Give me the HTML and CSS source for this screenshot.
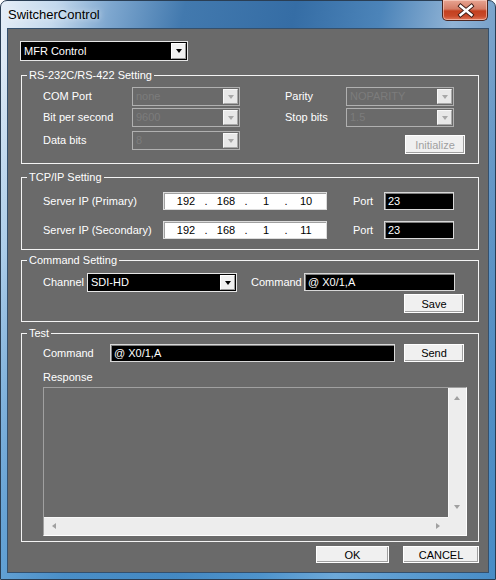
FILE: index.html
```html
<!DOCTYPE html>
<html>
<head>
<meta charset="utf-8">
<title>SwitcherControl</title>
<link rel="stylesheet" href="styles.css">
</head>
<body>
<div class="window">
  <div class="titlebar">
    <span class="title">SwitcherControl</span>
    <div class="close">
      <svg width="44" height="19" viewBox="0 0 44 19">
        <path d="M17.5 5 L28.5 14 M28.5 5 L17.5 14" stroke="#3a1a14" stroke-width="4.2" stroke-linecap="square"/>
        <path d="M17.5 5 L28.5 14 M28.5 5 L17.5 14" stroke="#ffffff" stroke-width="2.4" stroke-linecap="square"/>
      </svg>
    </div>
  </div>
  <div class="client">
    <div class="combo combo-main">
      <span class="val">MFR Control</span>
      <span class="dd"><i class="tri"></i></span>
    </div>

    <div class="group g-rs">
      <span class="legend">RS-232C/RS-422 Setting</span>
      <div class="row">
        <span class="lbl w89">COM Port</span>
        <div class="combo dis w108"><span class="val">none</span><span class="dd"><i class="tri"></i></span></div>
        <span class="lbl w61 ml45">Parity</span>
        <div class="combo dis w108"><span class="val">NOPARITY</span><span class="dd"><i class="tri"></i></span></div>
      </div>
      <div class="row mt2">
        <span class="lbl w89">Bit per second</span>
        <div class="combo dis w108"><span class="val">9600</span><span class="dd"><i class="tri"></i></span></div>
        <span class="lbl w61 ml45">Stop bits</span>
        <div class="combo dis w108"><span class="val">1.5</span><span class="dd"><i class="tri"></i></span></div>
      </div>
      <div class="row mt4 top">
        <span class="lbl w89 h19">Data bits</span>
        <div class="combo dis w108"><span class="val">8</span><span class="dd"><i class="tri"></i></span></div>
        <div class="btn btn-dis init">Initialize</div>
      </div>
    </div>

    <div class="group g-tcp">
      <span class="legend">TCP/IP Setting</span>
      <div class="row">
        <span class="lbl w120">Server IP (Primary)</span>
        <div class="ipbox"><span class="seg">192</span><span class="dot">.</span><span class="seg">168</span><span class="dot">.</span><span class="seg">1</span><span class="dot">.</span><span class="seg">10</span></div>
        <span class="lbl port-lbl">Port</span>
        <div class="tbox w70">23</div>
      </div>
      <div class="row mt11">
        <span class="lbl w120">Server IP (Secondary)</span>
        <div class="ipbox"><span class="seg">192</span><span class="dot">.</span><span class="seg">168</span><span class="dot">.</span><span class="seg">1</span><span class="dot">.</span><span class="seg">11</span></div>
        <span class="lbl port-lbl">Port</span>
        <div class="tbox w70">23</div>
      </div>
    </div>

    <div class="group g-cmd">
      <span class="legend">Command Setting</span>
      <div class="row top">
        <span class="lbl w44 h19">Channel</span>
        <div class="combo combo-black w150"><span class="val">SDI-HD</span><span class="dd"><i class="tri"></i></span></div>
        <span class="lbl w53 ml14 h18">Command</span>
        <div class="tbox w151">@ X0/1,A</div>
      </div>
      <div class="row">
        <div class="btn save">Save</div>
      </div>
    </div>

    <div class="group g-test">
      <span class="legend">Test</span>
      <div class="row">
        <span class="lbl w67">Command</span>
        <div class="tbox w285">@ X0/1,A</div>
        <div class="btn send">Send</div>
      </div>
      <div class="lbl resp-lbl">Response</div>
      <div class="resp">
        <div class="resp-area"></div>
        <div class="vscroll"><i class="arr-up"></i><i class="arr-down"></i></div>
        <div class="hscroll"><i class="arr-left"></i><i class="arr-right"></i></div>
        <div class="corner"></div>
      </div>
    </div>

    <div class="footer">
      <div class="btn ok">OK</div>
      <div class="btn cancel">CANCEL</div>
    </div>
  </div>
</div>
</body>
</html>
```

FILE: styles.css
```css
* { box-sizing: border-box; }
html, body { margin: 0; padding: 0; }
body {
  width: 496px;
  height: 580px;
  overflow: hidden;
  background: #ffffff;
  font-family: "Liberation Sans", Arial, sans-serif;
}

.window {
  position: relative;
  width: 496px;
  height: 580px;
  display: flex;
  flex-direction: column;
  padding: 0 7px 7px 7px;
  border: 1px solid #2a3e54;
  border-radius: 7px 7px 0 0;
  background:
    linear-gradient(to bottom, rgba(90,170,225,0) 0px, rgba(90,170,225,0) 60px, rgba(80,160,220,0.55) 100%),
    linear-gradient(102deg, #e6eff8 0%, #c4d9ed 9%, #7ea7cf 18%, #4279ae 30%, #356da5 48%, #4c84b9 62%, #90b3d5 74%, #6d9ac6 84%, #3e75ac 100%);
}

.titlebar {
  height: 28px;
  flex: 0 0 28px;
  display: flex;
  align-items: flex-start;
}
.title {
  padding-top: 6px;
  font-size: 13px;
  line-height: 15px;
  color: #000;
  text-shadow: 0 0 6px rgba(255,255,255,0.9);
}
.close {
  position: absolute;
  top: -1px;
  right: 7px;
  width: 46px;
  height: 21px;
  border: 1px solid #4b2620;
  border-top: none;
  border-radius: 0 0 5px 5px;
  background: linear-gradient(to bottom, #e8a592 0%, #d47c66 45%, #c3401f 55%, #c94a2a 80%, #e0785a 100%);
  box-shadow: inset 0 0 0 1px rgba(255,220,210,0.55);
  display: flex;
  align-items: center;
  justify-content: center;
}
.close svg { display: block; }

.client {
  flex: 1;
  background: #6a6a6a;
  padding: 12px 9px 0 12px;
  box-shadow: 0 0 0 1px #34506d;
  display: flex;
  flex-direction: column;
  color: #fff;
  font-size: 11px;
}

/* combos */
.combo {
  display: flex;
  align-items: center;
  height: 19px;
  border: 1px solid #e6e6e6;
  padding: 1px;
  background: #000;
  color: #fff;
  font-size: 11px;
}
.combo .val {
  flex: 1;
  padding-left: 2px;
  white-space: nowrap;
  overflow: hidden;
  line-height: 15px;
}
.combo .dd {
  width: 15px;
  height: 100%;
  background: #f0f0f0;
  border: 1px solid #ffffff;
  border-right-color: #9a9a9a;
  border-bottom-color: #9a9a9a;
  display: flex;
  align-items: center;
  justify-content: center;
}
.tri {
  display: block;
  width: 0;
  height: 0;
  border-left: 3.5px solid transparent;
  border-right: 3.5px solid transparent;
  border-top: 4px solid #000;
}
.combo-main {
  width: 168px;
  height: 20px;
}
.combo.dis {
  background: #6a6a6a;
  border-color: #b0b0b0;
  color: #7c7c7c;
}
.combo.dis .dd {
  background: #e8e8e8;
  border-color: #f8f8f8 #a8a8a8 #a8a8a8 #f8f8f8;
}
.combo.dis .tri { border-top-color: #a8a8a8; }

/* groups */
.group {
  position: relative;
  margin-left: 1px;
  width: 458px;
  border: 1px solid #f4f4f4;
  padding-left: 21px;
}
.legend {
  position: absolute;
  top: -7px;
  left: 5px;
  padding: 0 2px;
  background: #6a6a6a;
  font-size: 11px;
  line-height: 13px;
  color: #fff;
  white-space: nowrap;
}
.g-rs { margin-top: 14px; height: 89px; padding-top: 11px; }
.g-tcp { margin-top: 13px; height: 73px; padding-top: 14px; }
.g-cmd { margin-top: 10px; height: 62px; padding-top: 12px; }
.g-test { margin-top: 11px; height: 209px; padding-top: 10px; }

.row {
  display: flex;
  align-items: center;
}
.row.top { align-items: flex-start; }
.mt2 { margin-top: 2px; }
.mt4 { margin-top: 4px; }
.mt11 { margin-top: 11px; }
.ml45 { margin-left: 45px; }
.ml14 { margin-left: 14px; }

.lbl {
  font-size: 11px;
  line-height: 13px;
  color: #fff;
  white-space: nowrap;
}
.h19 { line-height: 19px; }
.h18 { line-height: 18px; }
.w44 { width: 44px; flex: 0 0 44px; }
.w53 { width: 53px; flex: 0 0 53px; }
.w61 { width: 61px; flex: 0 0 61px; }
.w67 { width: 67px; flex: 0 0 67px; }
.w70 { width: 70px; flex: 0 0 70px; }
.w89 { width: 89px; flex: 0 0 89px; }
.w108 { width: 108px; flex: 0 0 108px; }
.w120 { width: 120px; flex: 0 0 120px; }
.w150 { width: 150px; flex: 0 0 150px; }
.w151 { width: 151px; flex: 0 0 151px; }
.w285 { width: 285px; flex: 0 0 285px; }

/* ip box */
.ipbox {
  width: 164px;
  flex: 0 0 164px;
  height: 18px;
  display: flex;
  align-items: center;
  background: #fff;
  color: #000;
  border: 1px solid #dcdcdc;
  box-shadow: inset 1px 1px 0 #a0a0a0;
  padding-left: 5px;
  font-size: 11px;
}
.seg { width: 34px; text-align: center; }
.dot { width: 6px; text-align: center; }
.port-lbl { margin-left: 26px; width: 31px; flex: 0 0 31px; }

/* text boxes */
.tbox {
  height: 18px;
  background: #000;
  color: #fff;
  border: 1px solid #d8d8d8;
  box-shadow: inset 1px 1px 0 #808080;
  padding-left: 3px;
  font-size: 11px;
  line-height: 16px;
  white-space: nowrap;
}
.combo-black { height: 19px; }

/* buttons */
.btn {
  display: flex;
  align-items: center;
  justify-content: center;
  background: #f0f0f0;
  border: 1px solid #ffffff;
  box-shadow: inset -1px -1px 0 #a0a0a0;
  color: #000;
  font-size: 11px;
  height: 19px;
  width: 60px;
}
.btn-dis { color: #a0a0a0; }
.init { margin-left: 165px; margin-top: 4px; }
.save { margin-left: 361px; margin-top: 2px; }
.send { margin-left: 9px; height: 18px; }

.resp-lbl { margin-top: 9px; line-height: 12px; }
.resp {
  margin-top: 4px;
  width: 424px;
  height: 149px;
  display: grid;
  grid-template-columns: 1fr 18px;
  grid-template-rows: 1fr 18px;
  border: 1px solid;
  border-color: #a0a0a0 #ffffff #ffffff #a0a0a0;
}
.resp-area { background: #6a6a6a; }
.vscroll {
  position: relative;
  background: #ededed;
  border-left: 1px solid #f8f8f8;
}
.hscroll {
  position: relative;
  background: #ededed;
  border-top: 1px solid #f8f8f8;
}
.corner { background: #ededed; }
.arr-up, .arr-down, .arr-left, .arr-right {
  position: absolute;
  width: 0;
  height: 0;
}
.arr-up {
  top: 8px; left: 5px;
  border-left: 3.5px solid transparent;
  border-right: 3.5px solid transparent;
  border-bottom: 4px solid #a0a0a0;
}
.arr-down {
  bottom: 8px; left: 5px;
  border-left: 3.5px solid transparent;
  border-right: 3.5px solid transparent;
  border-top: 4px solid #a0a0a0;
}
.arr-left {
  top: 5px; left: 8px;
  border-top: 3.5px solid transparent;
  border-bottom: 3.5px solid transparent;
  border-right: 4px solid #a0a0a0;
}
.arr-right {
  top: 5px; right: 8px;
  border-top: 3.5px solid transparent;
  border-bottom: 3.5px solid transparent;
  border-left: 4px solid #a0a0a0;
}

.footer {
  margin-top: 4px;
  display: flex;
  justify-content: flex-end;
  gap: 14px;
}
.ok { width: 73px; height: 17px; }
.cancel { width: 76px; height: 17px; }
```
